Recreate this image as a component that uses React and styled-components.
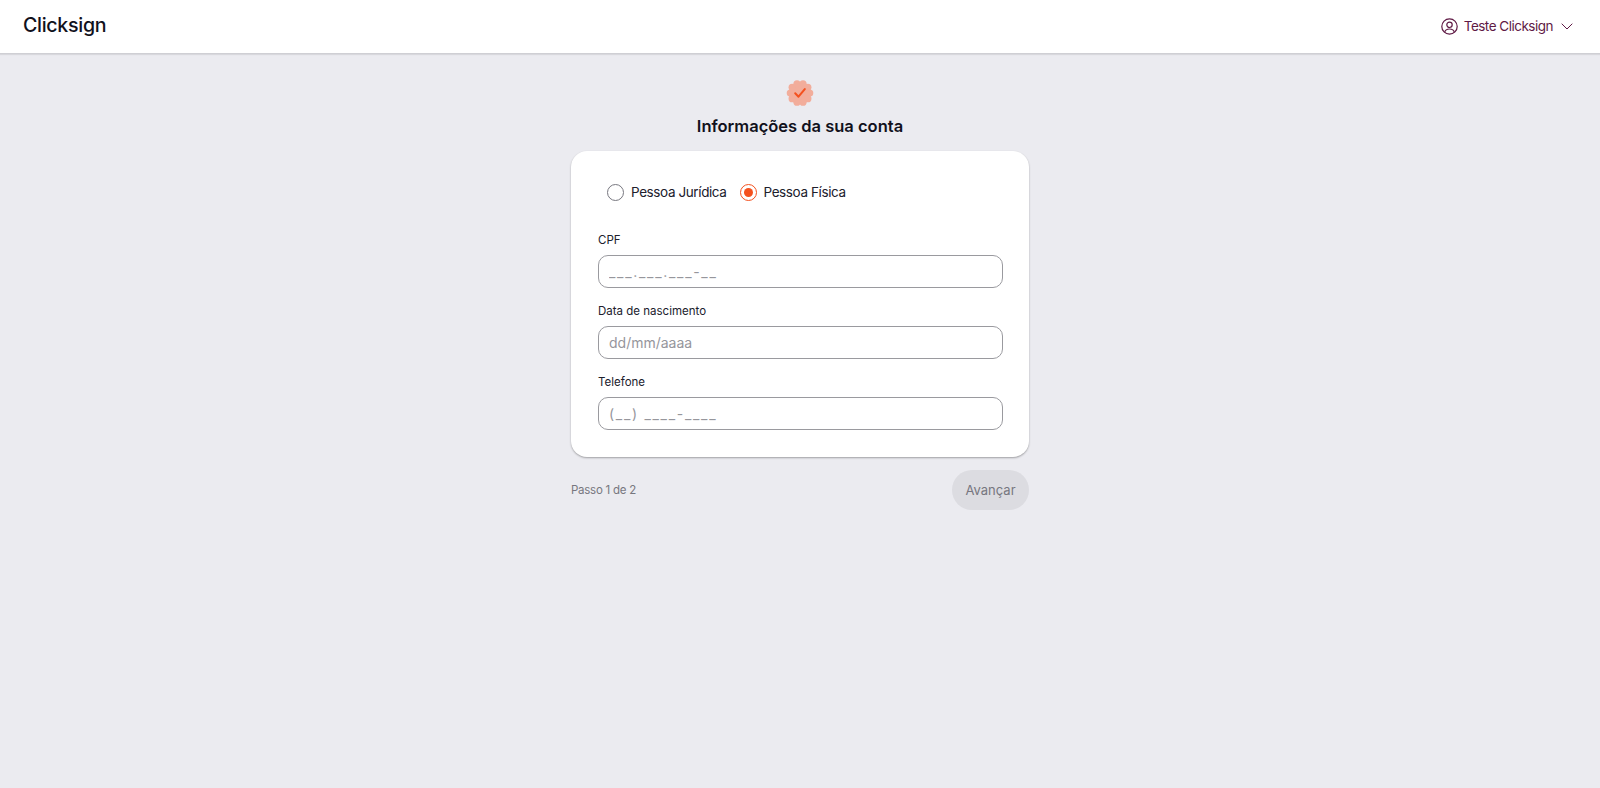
import React, { useState } from "react";
import styled, { createGlobalStyle } from "styled-components";

const GlobalStyle = createGlobalStyle`
  html, body {
    margin: 0;
    height: 100%;
    background: #ebebf0;
    font-family: "Inter", "Noto Sans", sans-serif;
  }
`;

const Page = styled.div`
  display: flex;
  flex-direction: column;
  min-height: 788px;
  background: #ebebf0;
`;

const Header = styled.header`
  display: flex;
  align-items: center;
  justify-content: space-between;
  height: 53px;
  padding: 0 27px 0 23px;
  background: #fff;
  border-bottom: 1px solid #cfcfd4;
  box-shadow: 0 1px 1px rgba(0, 0, 0, 0.08);
`;

const Logo = styled.div`
  font-size: 19.6px;
  font-weight: 500;
  letter-spacing: -0.3px;
  color: #11111c;
  margin-top: -4px;
`;

const UserMenu = styled.div`
  display: flex;
  align-items: center;
  color: #5f1a45;
  font-size: 13.5px;
  letter-spacing: -0.5px;
  margin-top: -1px;
`;

const UserName = styled.span`
  margin: 0 8px 0 6px;
`;

const Main = styled.main`
  display: flex;
  flex-direction: column;
  align-items: center;
  padding-top: 25px;
`;

const Title = styled.h1`
  margin: 8px 0 14px;
  font-size: 16.5px;
  line-height: 22px;
  font-weight: 600;
  color: #11111c;
`;

const Card = styled.form`
  box-sizing: border-box;
  width: 458px;
  height: 306px;
  padding: 27px 26px 0 27px;
  background: #fff;
  border-radius: 16px;
  box-shadow: 0 1px 2px rgba(0, 0, 0, 0.32);
`;

const RadioRow = styled.div`
  display: flex;
  gap: 13px;
  padding-left: 9px;
  margin-bottom: 26px;
`;

const RadioLabel = styled.label`
  display: flex;
  align-items: center;
  gap: 7px;
  height: 28px;
  font-size: 13.5px;
  letter-spacing: -0.4px;
  color: #20202c;
  cursor: pointer;
`;

const RadioCircle = styled.span`
  box-sizing: border-box;
  display: flex;
  align-items: center;
  justify-content: center;
  width: 17px;
  height: 17px;
  border-radius: 50%;
  border: 1px solid ${(p) => (p.$on ? "#f4511e" : "#77777f")};
  &::after {
    content: "";
    display: ${(p) => (p.$on ? "block" : "none")};
    width: 9px;
    height: 9px;
    border-radius: 50%;
    background: #f4511e;
  }
`;

const HiddenRadio = styled.input`
  display: none;
`;

const Field = styled.div`
  margin-bottom: 15px;
`;

const FieldLabel = styled.label`
  display: block;
  font-size: 11.5px;
  line-height: 16px;
  color: #20202c;
  margin-bottom: 7px;
`;

const TextInput = styled.input`
  box-sizing: border-box;
  display: block;
  width: 100%;
  height: 33px;
  padding: 0 10px;
  border: 1px solid #9a9a9f;
  border-radius: 10px;
  background: #fff;
  font-family: inherit;
  font-size: 14px;
  outline: none;
  &::placeholder {
    color: #96969c;
    letter-spacing: ${(p) => p.$spacing || "0"};
  }
`;

const Footer = styled.div`
  display: flex;
  align-items: center;
  justify-content: space-between;
  width: 458px;
  margin-top: 13px;
`;

const Step = styled.span`
  font-size: 11.5px;
  letter-spacing: -0.25px;
  color: #77777f;
`;

const NextButton = styled.button`
  width: 77px;
  height: 40px;
  border: 0;
  border-radius: 20px;
  background: #dcdce1;
  color: #77777f;
  font-family: inherit;
  font-size: 13px;
`;

// ten small circles round a disc give the scalloped badge edge
const bumps = Array.from({ length: 10 }, (_, i) => {
  const a = (i / 10) * Math.PI * 2;
  return { x: 14 + Math.cos(a) * 9.7, y: 14 + Math.sin(a) * 9.7 };
});

const BadgeIcon = () => (
  <svg width="28" height="28" viewBox="0 0 28 28">
    <g fill="#f2ad9b">
      <circle cx="14" cy="14" r="11" />
      {bumps.map((b, i) => (
        <circle key={i} cx={b.x} cy={b.y} r="3.600" />
      ))}
    </g>
    <path d="M9.200 14.200l3.300 3.500 6.300-7.600" fill="none" stroke="#f4511e" strokeWidth="2" strokeLinecap="round" strokeLinejoin="round" />
  </svg>
);

const UserIcon = () => (
  <svg width="17" height="17" viewBox="0 0 17 17" fill="none" stroke="#5f1a45" strokeWidth="1.200">
    <circle cx="8.500" cy="8.500" r="7.700" />
    <circle cx="8.500" cy="6.800" r="2.700" />
    <path d="M3.700 14.300c.5-2.300 2.300-3.300 4.800-3.300s4.300 1 4.800 3.300" />
  </svg>
);

const Chevron = () => (
  <svg width="12" height="7" viewBox="0 0 12 7" fill="none" stroke="#5f1a45" strokeWidth="1">
    <path d="M.7.700L6 6l5.300-5.300" />
  </svg>
);

export default function App() {
  const [kind, setKind] = useState("fisica");

  return (
    <Page>
      <GlobalStyle />
      <Header>
        <Logo>Clicksign</Logo>
        <UserMenu>
          <UserIcon />
          <UserName>Teste Clicksign</UserName>
          <Chevron />
        </UserMenu>
      </Header>
      <Main>
        <BadgeIcon />
        <Title>Informações da sua conta</Title>
        <Card>
          <RadioRow>
            <RadioLabel>
              <HiddenRadio type="radio" name="kind" checked={kind === "juridica"} onChange={() => setKind("juridica")} />
              <RadioCircle $on={kind === "juridica"} />
              Pessoa Jurídica
            </RadioLabel>
            <RadioLabel>
              <HiddenRadio type="radio" name="kind" checked={kind === "fisica"} onChange={() => setKind("fisica")} />
              <RadioCircle $on={kind === "fisica"} />
              Pessoa Física
            </RadioLabel>
          </RadioRow>
          <Field>
            <FieldLabel>CPF</FieldLabel>
            <TextInput placeholder="___.___.___-__" $spacing="1.7px" />
          </Field>
          <Field>
            <FieldLabel>Data de nascimento</FieldLabel>
            <TextInput placeholder="dd/mm/aaaa" />
          </Field>
          <Field>
            <FieldLabel>Telefone</FieldLabel>
            <TextInput placeholder="(__) ____-____" $spacing="1.7px" />
          </Field>
        </Card>
        <Footer>
          <Step>Passo 1 de 2</Step>
          <NextButton type="button" disabled>Avançar</NextButton>
        </Footer>
      </Main>
    </Page>
  );
}
